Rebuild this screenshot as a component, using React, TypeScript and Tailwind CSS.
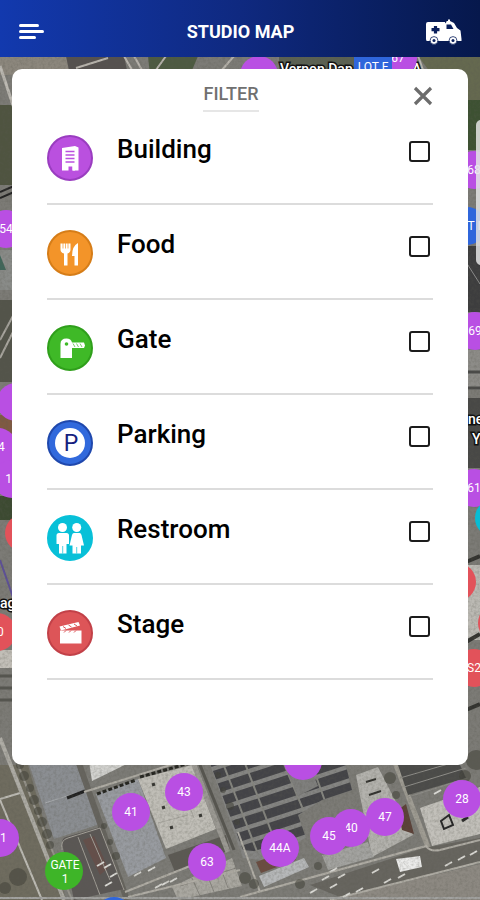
import { useState } from "react";
import type { ReactNode } from "react";

type Pin = { x: number; y: number; color: string; label?: string };

const PURPLE = "#b94fe3";
const GREEN = "#3eb528";
const BLUE = "#2f66db";
const RED = "#e2525a";
const CYAN = "#08bdd4";

const PINS: Pin[] = [
  { x: 259, y: 75, color: PURPLE, label: "142" },
  { x: 398, y: 58, color: PURPLE, label: "67" },
  { x: 6, y: 229, color: PURPLE, label: "54" },
  { x: 16, y: 402, color: PURPLE },
  { x: -2, y: 447, color: PURPLE, label: "14" },
  { x: 12, y: 479, color: PURPLE, label: "15" },
  { x: 24, y: 533, color: RED },
  { x: -3, y: 632, color: RED, label: "20" },
  { x: 474, y: 170, color: PURPLE, label: "68" },
  { x: 467, y: 226, color: BLUE, label: "LOT I" },
  { x: 475, y: 331, color: PURPLE, label: "69" },
  { x: 474, y: 488, color: PURPLE, label: "61" },
  { x: 494, y: 518, color: CYAN },
  { x: 457, y: 582, color: RED },
  { x: 497, y: 623, color: RED },
  { x: 474, y: 668, color: RED, label: "S2" },
  { x: 303, y: 761, color: PURPLE, label: "44" },
  { x: 184, y: 792, color: PURPLE, label: "43" },
  { x: 131, y: 812, color: PURPLE, label: "41" },
  { x: 207, y: 862, color: PURPLE, label: "63" },
  { x: 0, y: 838, color: PURPLE, label: "61" },
  { x: 280, y: 848, color: PURPLE, label: "44A" },
  { x: 351, y: 828, color: PURPLE, label: "40" },
  { x: 329, y: 836, color: PURPLE, label: "45" },
  { x: 385, y: 817, color: PURPLE, label: "47" },
  { x: 462, y: 799, color: PURPLE, label: "28" },
  { x: 114, y: 916, color: BLUE },
];

const PLACES = [
  { x: 280, y: 74, text: "Vernon Dan" },
  { x: 412, y: 74, text: "A" },
  { x: 0, y: 608, text: "ag" },
  { x: 468, y: 424, text: "ne" },
  { x: 472, y: 444, text: "Y" },
];

const SOLAR_ROWS = Array.from({ length: 13 }, (_, i) => 750 + i * 14);

const CARS = [
  [97, 866], [104, 868], [110, 877], [105, 886], [134, 876], [148, 871],
  [155, 888], [162, 885], [170, 882], [322, 880], [330, 888], [343, 897],
  [356, 892], [372, 873], [384, 883], [398, 878], [458, 860], [470, 855],
  [434, 794], [330, 872], [338, 878], [310, 893], [445, 866],
];

const SHRUBS = [
  [20, 765, 4], [24, 776, 5], [30, 788, 4], [34, 800, 5], [38, 811, 4],
  [42, 822, 5], [47, 834, 5], [50, 845, 4], [18, 877, 9], [5, 888, 6],
  [218, 775, 3], [223, 790, 3], [230, 806, 4], [237, 822, 3], [104, 826, 3],
  [110, 842, 3], [116, 856, 4], [390, 778, 6], [396, 795, 4], [465, 776, 6],
  [476, 760, 10], [245, 878, 6], [254, 884, 5], [300, 884, 5], [318, 866, 4],
];

function MapView() {
  return (
    <svg
      role="img"
      aria-label="Map"
      viewBox="0 0 480 900"
      preserveAspectRatio="xMidYMid slice"
      className="absolute inset-0 w-full h-full"
    >
      <defs>
        <filter id="grain" x="0" y="0" width="100%" height="100%">
          <feTurbulence type="fractalNoise" baseFrequency="0.35" numOctaves="3" seed="4" />
          <feColorMatrix values="0 0 0 0 0.1  0 0 0 0 0.1  0 0 0 0 0.08  1.6 0 0 0 -0.6" />
        </filter>
        <clipPath id="solar">
          <path d="M205 750H342L352 790 322 800 298 815 306 838 262 852 243 850Z" />
        </clipPath>
      </defs>

      <rect width="480" height="900" fill="#7c7b76" />

      {/* top strip */}
      <path d="M0 56H66L70 75H0Z" fill="#8c877d" />
      <path d="M66 56H124L128 75H70Z" fill="#55514f" />
      <path d="M148 56H198L190 75H150Z" fill="#4d5a41" />
      <path d="M279 56H354V75H279Z" fill="#5b6152" />
      <path d="M418 56H480V120H466Z" fill="#65694f" />
      <path d="M76 68L108 58M124 56L132 70M134 56L142 70M166 56L156 70M234 56L222 70M418 56L423 70" stroke="#b9b5ae" strokeWidth="2" />

      {/* left edge */}
      <path d="M0 105H14V185H0Z" fill="#4f5440" />
      <path d="M0 66L14 108" stroke="#bcb9b2" strokeWidth="3" />
      <path d="M0 192L14 186M0 198L14 192" stroke="#222" strokeWidth="2" />
      <path d="M0 250H14V290H0Z" fill="#898b88" />
      <path d="M0 255L6 270H0Z" fill="#40665a" />
      <path d="M0 300H14V382H0Z" fill="#53544a" />
      <path d="M0 340L14 314M0 358L14 330" stroke="#a9a69f" strokeWidth="2" />
      <path d="M0 415H14V440H0Z" fill="#805a43" />
      <path d="M0 496H14V520H0Z" fill="#3c4a31" />
      <path d="M0 560L14 600" stroke="#5d4f9a" strokeWidth="2" />
      <path d="M0 650H14V668H0Z" fill="#c2bfb8" />
      <path d="M0 676H14M0 688H14M0 700H14" stroke="#55554f" strokeWidth="3" />

      {/* right edge */}
      <path d="M466 100H480V150H466Z" fill="#3d5132" />
      <path d="M466 246H480V312H466Z" fill="#3d3d3e" />
      <path d="M466 262L480 284" stroke="#8d8d8d" />
      <path d="M466 350H480V390H466Z" fill="#8d8c88" />
      <path d="M466 372H480M466 388H480" stroke="#4a4a48" strokeWidth="3" />
      <path d="M466 398H480V468H466Z" fill="#484846" />
      <path d="M466 565H480V640H466Z" fill="#bcbab4" />
      <path d="M466 562L480 556M466 642L480 634M466 710L480 704" stroke="#33332f" strokeWidth="4" />

      {/* railway and service road */}
      <path d="M0 765H28L66 900H0Z" fill="#6f6c5f" />
      <path d="M0 738L64 900" stroke="#aeaca5" strokeWidth="4" />
      <path d="M14 755L72 900" stroke="#98958d" strokeWidth="2" />
      <path d="M0 800L42 900M0 799L20 793" stroke="#bdbbb4" strokeWidth="2" />

      {/* warehouses on the left */}
      <path d="M26 755H76L100 824 54 839Z" fill="#8b8e92" />
      <path d="M45 803L86 790" stroke="#a7aaad" />
      <path d="M67 798L85 791" stroke="#1f1f1f" strokeWidth="3" />
      <path d="M88 755H145L92 781Z" fill="#d3d3d0" />
      <path d="M76 755L127 900" stroke="#66645e" strokeWidth="6" />
      <path d="M84 792L196 757" stroke="#b0ada5" strokeWidth="2" />
      <path d="M96 794L138 779 166 858 128 877Z" fill="#989ba0" />
      <path d="M138 779L192 765 216 829 166 849Z" fill="#c0beb7" />
      <path d="M97 794L136 780M140 777L190 763" stroke="#24241f" strokeWidth="3" strokeDasharray="4 2" />
      <path d="M152 785L155 784M162 808L165 807M170 828L173 827M199 816L202 815" stroke="#33332f" strokeWidth="3" />
      <path d="M158 823L188 815M182 788L194 818" stroke="#a8a69f" strokeWidth="1" />
      <path d="M62 843Q62 838 66 837L100 827 124 889 74 900Z" fill="#5b5755" />
      <path d="M83 840L94 836 108 868 100 875Z" fill="#654f4a" />
      <path d="M62 850Q60 840 68 838L100 828 124 890M78 837L100 895M90 834L110 880" fill="none" stroke="#a5a29a" />
      <path d="M168 855L226 835 230 850 175 872Z" fill="#5c5954" />
      <path d="M192 760L228 852" stroke="#9b9993" strokeWidth="5" />
      <path d="M198 760L234 850" stroke="#56554f" strokeWidth="3" />
      <path d="M172 887L232 858 242 886 178 900Z" fill="#a9a7a0" />
      <path d="M180 886L236 868M192 878L200 896M206 872L214 892M220 866L228 888" stroke="#85837d" />

      {/* solar roof */}
      <path d="M205 750H342L352 790 322 800 298 815 306 838 262 860 243 858Z" fill="#858583" />
      <g clipPath="url(#solar)">
        {SOLAR_ROWS.map((y) => (
          <path key={y} d={`M200 ${y + 16}L360 ${y - 36}`} stroke="#434347" strokeWidth="9" />
        ))}
        <path d="M214 740L268 880M236 740L290 880M274 740L320 850M303 740L330 815" stroke="#85857f" strokeWidth="2" />
        <path d="M286 768L308 762 318 786 298 796Z" fill="#7f7f7d" />
      </g>
      <path d="M238 832L260 892" stroke="#b0ada5" strokeWidth="2" />
      <path d="M256 862L290 850 296 860 261 873Z" fill="#6b4c40" />
      <path d="M259 876L304 858 309 867 264 887Z" fill="#b6b8b9" />

      {/* buildings around 40 - 47 */}
      <path d="M356 775L378 767 413 835 372 857Z" fill="#b3b2ad" />
      <path d="M366 782L376 779M369 795L381 791" stroke="#33332f" strokeWidth="2" />
      <path d="M322 855L368 842 374 857 328 870Z" fill="#a3a3a0" />
      <path d="M398 810L406 804 414 834 402 830Z" fill="#5b4037" />
      <path d="M392 755L430 852" stroke="#9f9c93" strokeWidth="5" />
      <path d="M398 765H460L466 778 408 795Z" fill="#4b4b49" />
      <path d="M400 778L462 760M404 787L466 768M408 797L468 778" stroke="#8f8e89" strokeWidth="1" />
      <path d="M420 808L480 787V834L432 846Z" fill="#c2c0ba" />
      <path d="M441 821L449 815 453 825 444 829Z" fill="none" stroke="#262626" strokeWidth="2" />
      <path d="M462 821L468 817" stroke="#262626" strokeWidth="3" />

      {/* streets along the bottom */}
      <path d="M310 885L424 848 480 838V862L340 897Z" fill="#67655f" />
      <path d="M330 900L480 864V900Z" fill="#8d8982" />
      <path d="M125 892L200 862M128 897L240 870M240 897L426 846Q430 852 440 850L480 840M330 900L480 862" fill="none" stroke="#b0ada5" strokeWidth="2" />
      <path d="M396 859L420 856 422 867 400 872Z" fill="#ebebea" />
      <path d="M0 898H480" stroke="#a2a2a0" strokeWidth="2" />

      {SHRUBS.map(([x, y, r]) => (
        <circle key={`${x}-${y}`} cx={x} cy={y} r={r} fill="#3f4037" opacity="0.55" />
      ))}
      {CARS.map(([x, y]) => (
        <path key={`${x}-${y}`} d={`M${x} ${y}l7 -4`} stroke="#dddcd7" strokeWidth="2" />
      ))}

      <rect width="480" height="900" filter="url(#grain)" opacity="0.35" />

      {PLACES.map((place) => (
        <text
          key={place.text}
          x={place.x}
          y={place.y}
          fill="#fff"
          stroke="#111"
          strokeWidth="3"
          paintOrder="stroke"
          className="font-[Roboto,sans-serif] text-[14px] font-medium"
        >
          {place.text}
        </text>
      ))}

      {PINS.map((pin) => (
        <g key={`${pin.x}-${pin.y}`}>
          <circle cx={pin.x} cy={pin.y} r="19" fill={pin.color} />
          {pin.label && (
            <text
              x={pin.x}
              y={pin.y + 4}
              textAnchor="middle"
              fill="#fff"
              className="font-[Roboto,sans-serif] text-[12px]"
            >
              {pin.label}
            </text>
          )}
        </g>
      ))}

      <rect x="354" y="57" width="38" height="20" fill={BLUE} />
      <text x="373" y="71" textAnchor="middle" fill="#fff" className="font-[Roboto,sans-serif] text-[12px]">
        LOT F
      </text>

      <circle cx="64" cy="871" r="19" fill={GREEN} />
      <text textAnchor="middle" fill="#fff" className="font-[Roboto,sans-serif] text-[12px]">
        <tspan x="65" y="869">GATE</tspan>
        <tspan x="65" y="883">1</tspan>
      </text>

      <rect x="476" y="120" width="20" height="145" rx="5" fill="#e4e4e4" opacity="0.85" />
    </svg>
  );
}

function Badge({ fill, ring, children }: { fill: string; ring: string; children: ReactNode }) {
  return (
    <svg viewBox="0 0 46 46" className="w-[46px] h-[46px] shrink-0" aria-hidden="true">
      <circle cx="23" cy="23" r="22" fill={fill} stroke={ring} strokeWidth="2" />
      {children}
    </svg>
  );
}

const FILTERS = [
  {
    id: "building",
    name: "Building",
    icon: (
      <Badge fill="#ba50df" ring="#9a3dc0">
        <path d="M15 13L28 11V35.500H25.500V31.500H21.500V35.500H15Z" fill="#fff" />
        <path d="M28 11L31.500 12.500V35.500H25.500V30H28Z" fill="#fff" />
        <path d="M18.500 16.500H27.500M18.500 20H27.500M18.500 23.500H27.500M18.500 27H27.500" stroke="#ba50df" strokeWidth="1.300" />
      </Badge>
    ),
  },
  {
    id: "food",
    name: "Food",
    icon: (
      <Badge fill="#f39429" ring="#d67d18">
        <path d="M13.500 13.500H23.500V19.500Q23.500 22.500 20.500 23.500V35.500H17V23.500Q13.500 22.500 13.500 19.500Z" fill="#fff" />
        <path d="M16 13V18.500M18.500 13V18.500M21 13V18.500" stroke="#f39429" strokeWidth="0.700" />
        <path d="M31 13V35.500H27.500V26H25Q25 16 31 13Z" fill="#fff" />
      </Badge>
    ),
  },
  {
    id: "gate",
    name: "Gate",
    icon: (
      <Badge fill="#3fb927" ring="#2f9f1b">
        <path d="M13.500 33V19Q13.500 13.500 19.500 13.500 24 13.500 25 17.500H37L38 20.500 37 23H25V33Z" fill="#fff" />
        <circle cx="19.500" cy="19" r="1.800" fill="#3fb927" />
        <path d="M26 18.500L28 22M29.500 18.500L31.500 22M33 18.500L35 22" stroke="#3fb927" strokeWidth="0.700" />
      </Badge>
    ),
  },
  {
    id: "parking",
    name: "Parking",
    icon: (
      <Badge fill="#3169dc" ring="#1f48ad">
        <circle cx="23" cy="23" r="15" fill="#fff" />
        <text x="24" y="31" textAnchor="middle" fill="#15217e" className="font-[Roboto,sans-serif] text-[23px]">
          P
        </text>
      </Badge>
    ),
  },
  {
    id: "restroom",
    name: "Restroom",
    icon: (
      <Badge fill="#08c0d8" ring="#08c0d8">
        <circle cx="15.500" cy="12.500" r="4.500" fill="#fff" />
        <path d="M12 18H19.500Q22 18 22 20.500V29H19.500V38.500H12V29H9.500V20.500Q9.500 18 12 18Z" fill="#fff" />
        <circle cx="29.700" cy="12.500" r="4.500" fill="#fff" />
        <path d="M27 18H32.500Q34 18 34.500 20L37 30.500H34V38.500H25.500V30.500H22.500L25 20Q25.500 18 27 18Z" fill="#fff" />
        <path d="M15.700 31V38.500M29.700 32V38.500" stroke="#08c0d8" strokeWidth="0.700" />
      </Badge>
    ),
  },
  {
    id: "stage",
    name: "Stage",
    icon: (
      <Badge fill="#dd5558" ring="#c24148">
        <path d="M13 20.500H34.500V33.500H13Z" fill="#fff" />
        <path d="M12.500 16.500L31.500 12 33 15.500 14 20.500Z" fill="#fff" />
        <path d="M16 16.500L19 18.500M21.500 15L24.500 17M27 14L30 16M17 22.500L19 20.500M22 22.500L24 20.500M27 22.500L29 20.500" stroke="#dd5558" strokeWidth="1" />
      </Badge>
    ),
  },
];

function Header() {
  return (
    <header className="relative h-[57px] shrink-0 flex items-center justify-between pl-[19px] pr-[18px] pt-[6px] bg-linear-to-r from-[#1239ae] via-[#0f2980] via-50% to-[#06184c]">
      <button aria-label="Menu" className="flex flex-col gap-[3px] w-9">
        <span className="h-[3px] w-5 rounded-full bg-white" />
        <span className="h-[3px] w-[25px] rounded-full bg-white" />
        <span className="h-[3px] w-[17px] rounded-full bg-white" />
      </button>
      <h1 className="text-white text-[18px] leading-6 font-bold">STUDIO MAP</h1>
      <button aria-label="Emergency">
        <svg viewBox="0 0 36 26" className="w-9 h-[26px]" aria-hidden="true">
          <path d="M2 3H19V4.500L20.500 3V2H22V0.500H24V2L28 4 31 9 34.500 11.500 35.500 20V22H1Q0 22 0 20V5Q0 3 2 3Z" fill="#fff" />
          <path d="M20.500 5.500H25L27.500 10H20.500Z" fill="#0a1f5c" />
          <path d="M9.500 7V14.500M5.500 10.700H13.500" stroke="#0a1f5c" strokeWidth="3.200" />
          <circle cx="8" cy="21.500" r="3.900" fill="#fff" stroke="#0a1f5c" strokeWidth="0.800" />
          <circle cx="8" cy="21.500" r="1.500" fill="#0a1f5c" />
          <circle cx="27" cy="21.500" r="3.900" fill="#fff" stroke="#0a1f5c" strokeWidth="0.800" />
          <circle cx="27" cy="21.500" r="1.500" fill="#0a1f5c" />
        </svg>
      </button>
    </header>
  );
}

export default function App() {
  const [selected, setSelected] = useState<string[]>([]);

  const toggle = (id: string) =>
    setSelected((prev) => (prev.includes(id) ? prev.filter((s) => s !== id) : [...prev, id]));

  return (
    <div className="relative min-h-screen flex flex-col overflow-hidden font-[Roboto,sans-serif]">
      <MapView />
      <Header />

      <section className="relative mx-3 mt-3 mb-8 px-[35px] pb-[85px] rounded-[10px] bg-white">
        <div className="relative h-[41px] flex justify-center pr-[18px]">
          <h2 className="self-start pt-[13px] pb-1 border-b-2 border-[#e6e6e6] text-[18px] leading-6 font-medium text-[#707070]">
            FILTER
          </h2>
          <button aria-label="Close" className="absolute right-0 top-[17px]">
            <svg viewBox="0 0 20 20" className="w-5 h-5" aria-hidden="true">
              <path d="M2 2L18 18M18 2L2 18" stroke="#6c6c6c" strokeWidth="3.200" />
            </svg>
          </button>
        </div>

        <ul>
          {FILTERS.map((filter) => (
            <li key={filter.id} className="h-[95px] flex items-start border-b-2 border-[#dcdcdc] pt-[25px]">
              {filter.icon}
              <label
                htmlFor={filter.id}
                className="flex-1 pl-6 text-[26px] leading-7 font-medium text-black"
              >
                {filter.name}
              </label>
              <input
                id={filter.id}
                type="checkbox"
                checked={selected.includes(filter.id)}
                onChange={() => toggle(filter.id)}
                className="appearance-none mt-[6px] mr-[3px] w-[21px] h-[21px] rounded-[3px] border-2 border-[#1c1c1c] checked:bg-[#1c1c1c]"
              />
            </li>
          ))}
        </ul>
      </section>
    </div>
  );
}
